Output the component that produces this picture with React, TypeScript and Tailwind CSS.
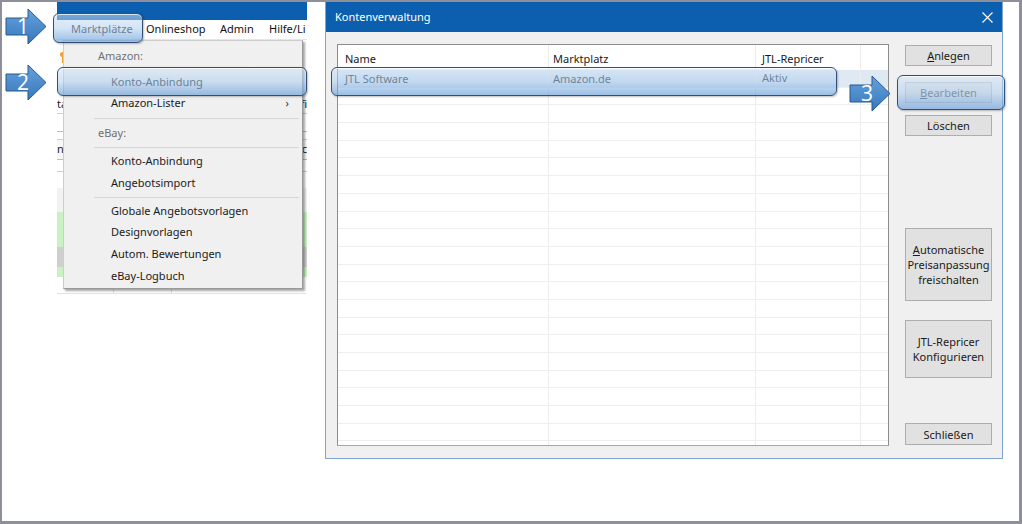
import React from "react";

const Arrow = ({ n, className }: { n: string; className: string }) => (
  <div className={"absolute w-[42px] h-[37px] " + className}>
    <svg width="42" height="37" viewBox="0 0 42 37" className="absolute left-0 top-0">
      <defs>
        <linearGradient id={"ag" + n} x1="0" y1="0" x2="0" y2="1">
          <stop offset="0" stopColor="#64a2dc" />
          <stop offset="1" stopColor="#3877bd" />
        </linearGradient>
      </defs>
      <path d="M1 10 H23 V1 L41 18.5 L23 36 V27 H1 Z" fill={"url(#ag" + n + ")"} stroke="#27588a" strokeWidth="1" strokeLinejoin="miter" />
    </svg>
    <span className="absolute left-[8px] top-[6px] w-[20px] text-center text-white text-[21px] leading-[24px] font-['Open_Sans',sans-serif]">
      {n}
    </span>
  </div>
);

const Callout = ({ className }: { className: string }) => (
  <div
    className={
      "absolute rounded-[6px] border border-[#2f5078] bg-linear-to-b from-[rgba(208,227,246,0.55)] via-[rgba(168,202,237,0.5)] to-[rgba(108,160,218,0.68)] shadow-[inset_0_1px_0_rgba(255,255,255,0.75),1px_1px_2px_rgba(0,0,0,0.25)] " +
      className
    }
  />
);

const MenuItem = ({ children, arrow, h = "h-[22px]" }: { children: React.ReactNode; arrow?: boolean; h?: string }) => (
  <div className={"flex items-center pl-[47px] pr-[13px] text-[#1b1b1b] " + h}>
    <span className="flex-1">{children}</span>
    {arrow && <span className="text-[#333]">›</span>}
  </div>
);

const Sep = ({ h = "h-[8px]" }: { h?: string }) => (
  <div className={"flex items-center pl-[30px] pr-[3px] " + h}>
    <div className="h-px w-full bg-[#d6d6d6]" />
  </div>
);

const LeftApp = () => (
  <div className="relative ml-[55px] w-[250px] h-[308px] overflow-hidden bg-white">
    <div className="h-[18px] bg-[#0b5fae]" />
    <div className="h-[20px] flex items-center text-[11px] text-[#111] border-b border-[#e6e6e6]">
      <span className="ml-[14px] w-[75px] text-[#2f3338]">Marktplätze</span>
      <span className="w-[74px]">Onlineshop</span>
      <span className="w-[49px]">Admin</span>
      <span className="whitespace-nowrap">Hilfe/Li</span>
    </div>
    {/* app content behind menu */}
    <div className="flex flex-col text-[11px] text-[#222]">
      <div className="h-[12px]" />
      <div className="h-[12px] pl-[3px] flex flex-col items-start">
        <div className="w-[5px] h-[5px] rounded-full bg-[#f0a030]" />
        <div className="ml-[2px] w-px h-[6px] bg-[#f0a030]" />
      </div>
      <div className="h-[32px]" />
      <div className="h-[18px] flex justify-between items-center border-b border-[#cfcfcf]">
        <span>ta</span>
        <span>fi</span>
      </div>
      <div className="h-[18px] border-b border-[#bdbdbd]" />
      <div className="h-[8px] border-b border-[#cfcfcf]" />
      <div className="h-[20px] flex justify-between items-center border-b border-[#bdbdbd] bg-[#f7f7f7]">
        <span>n</span>
        <span>sc</span>
      </div>
      <div className="h-[12px] border-b border-[#cfcfcf]" />
      <div className="h-[16px]" />
      <div className="h-[24px] bg-[#f2f2f2]" />
      <div className="h-[35px] bg-[#c9f2c2]" />
      <div className="h-[20px] bg-[#cfcfcf]" />
      <div className="h-[10px] bg-[#c9f2c2]" />
      <div className="h-[17px] flex border-b border-[#e2e2e2]">
        <div className="w-[57px] border-r border-[#e2e2e2]" />
        <div className="w-[58px] border-r border-[#e2e2e2]" />
      </div>
    </div>
    {/* dropdown menu */}
    <div className="absolute left-[6px] top-[38px] w-[240px] h-[249px] bg-[#f0f0f0] border border-[#cdcdcd] border-r-[#9a9a9a] border-b-[#9a9a9a] shadow-[2px_2px_2px_rgba(0,0,0,0.35)] text-[11px] pt-[3px]">
      <div className="h-[27px] pl-[34px] leading-[24px] text-[#707070]">Amazon:</div>
      <div className="h-[22px] flex items-center pl-[47px] text-[#2c3540]">Konto-Anbindung</div>
      <MenuItem arrow h="h-[21px]">Amazon-Lister</MenuItem>
      <Sep />
      <div className="h-[22px] flex items-center pl-[34px] text-[#707070]">eBay:</div>
      <Sep h="h-[6px]" />
      <MenuItem>Konto-Anbindung</MenuItem>
      <MenuItem>Angebotsimport</MenuItem>
      <Sep h="h-[6px]" />
      <MenuItem>Globale Angebotsvorlagen</MenuItem>
      <MenuItem h="h-[21px]">Designvorlagen</MenuItem>
      <MenuItem>Autom. Bewertungen</MenuItem>
      <MenuItem>eBay-Logbuch</MenuItem>
    </div>
  </div>
);

const Btn = ({ children, className = "", dim }: { children: React.ReactNode; className?: string; dim?: boolean }) => (
  <div
    className={
      "w-[87px] flex flex-col items-center justify-center border text-[11px] leading-[15px] text-center " +
      (dim ? "text-[#5a5f66] bg-[#e6e6e6] border-[#c4c4c4] " : "text-[#1a1a1a] bg-[#e1e1e1] border-[#adadad] ") +
      className
    }
  >
    {children}
  </div>
);

const rows = Array.from({ length: 22 });

const Dialog = () => (
  <div className="ml-[18px] w-[678px] h-[457px] flex flex-col border-x border-b border-[#7fa6cf] bg-[#f0f0f0]">
    <div className="h-[30px] bg-[#0b5fae] flex items-center justify-between pl-[9px] pr-[9px] text-white text-[11px]">
      <span>Kontenverwaltung</span>
      <svg width="11" height="11" viewBox="0 0 11 11">
        <path d="M0.5 0.5 L10.5 10.5 M10.5 0.5 L0.5 10.5" stroke="#ffffff" strokeWidth="1.1" />
      </svg>
    </div>
    <div className="flex pl-[11px] pt-[12px]">
      <div className="w-[552px] h-[402px] border border-[#8c8c8c] border-b-[#a8a8a8] bg-white overflow-hidden text-[11px]">
        <div className="h-[25px] flex text-[#1a1a1a]">
          <div className="w-[211px] border-r border-[#ececec] pl-[7px] pt-[6px]">Name</div>
          <div className="w-[207px] border-r border-[#ececec] pl-[4px] pt-[6px]">Marktplatz</div>
          <div className="w-[105px] border-r border-[#ececec] pl-[6px] pt-[6px]">JTL-Repricer</div>
          <div className="flex-1" />
        </div>
        {rows.map((_, i) => (
          <div
            key={i}
            className={
              "h-[17.7px] flex border-b border-[#eeeeee] " + (i === 0 ? "bg-[#dfe9f3] text-[#2e3237]" : "")
            }
          >
            <div className="w-[211px] border-r border-[#ececec] pl-[7px] leading-[17px]">{i === 0 ? "JTL Software" : ""}</div>
            <div className="w-[207px] border-r border-[#ececec] pl-[4px] leading-[17px]">{i === 0 ? "Amazon.de" : ""}</div>
            <div className="w-[105px] border-r border-[#ececec] pl-[6px] leading-[15px]">{i === 0 ? "Aktiv" : ""}</div>
            <div className="flex-1" />
          </div>
        ))}
      </div>
      <div className="ml-[16px] flex flex-col">
        <Btn className="mt-[1px] h-[21px]">
          <span>
            <span className="underline">A</span>nlegen
          </span>
        </Btn>
        <Btn dim className="mt-[16px] h-[21px]">
          <span>
            <span className="underline">B</span>earbeiten
          </span>
        </Btn>
        <Btn className="mt-[12px] h-[21px]">Löschen</Btn>
        <Btn className="mt-[92px] h-[73px]">
          <span>
            <span className="underline">A</span>utomatische
          </span>
          <span>Preisanpassung</span>
          <span>freischalten</span>
        </Btn>
        <Btn className="mt-[19px] h-[58px]">
          <span>JTL-Repricer</span>
          <span>Konfigurieren</span>
        </Btn>
        <Btn className="mt-[45px] h-[22px]">Schließen</Btn>
      </div>
    </div>
  </div>
);

export default function App() {
  return (
    <div className="relative w-[1022px] h-[524px] bg-white border-t-2 border-l-2 border-r-[3px] border-b-[3px] border-[#8f8f99] overflow-hidden font-['Segoe_UI','Noto_Sans',sans-serif]">
      <div className="flex items-start">
        <LeftApp />
        <Dialog />
      </div>
      <Callout className="left-[51px] top-[11px] w-[90px] h-[30px]" />
      <Callout className="left-[55px] top-[65px] w-[250px] h-[29px]" />
      <Callout className="left-[329px] top-[65px] w-[506px] h-[29px]" />
      <Callout className="left-[895px] top-[73px] w-[108px] h-[35px]" />
      <Arrow n="1" className="left-[3px] top-[6px]" />
      <Arrow n="2" className="left-[3px] top-[62px]" />
      <Arrow n="3" className="left-[847px] top-[73px]" />
    </div>
  );
}
